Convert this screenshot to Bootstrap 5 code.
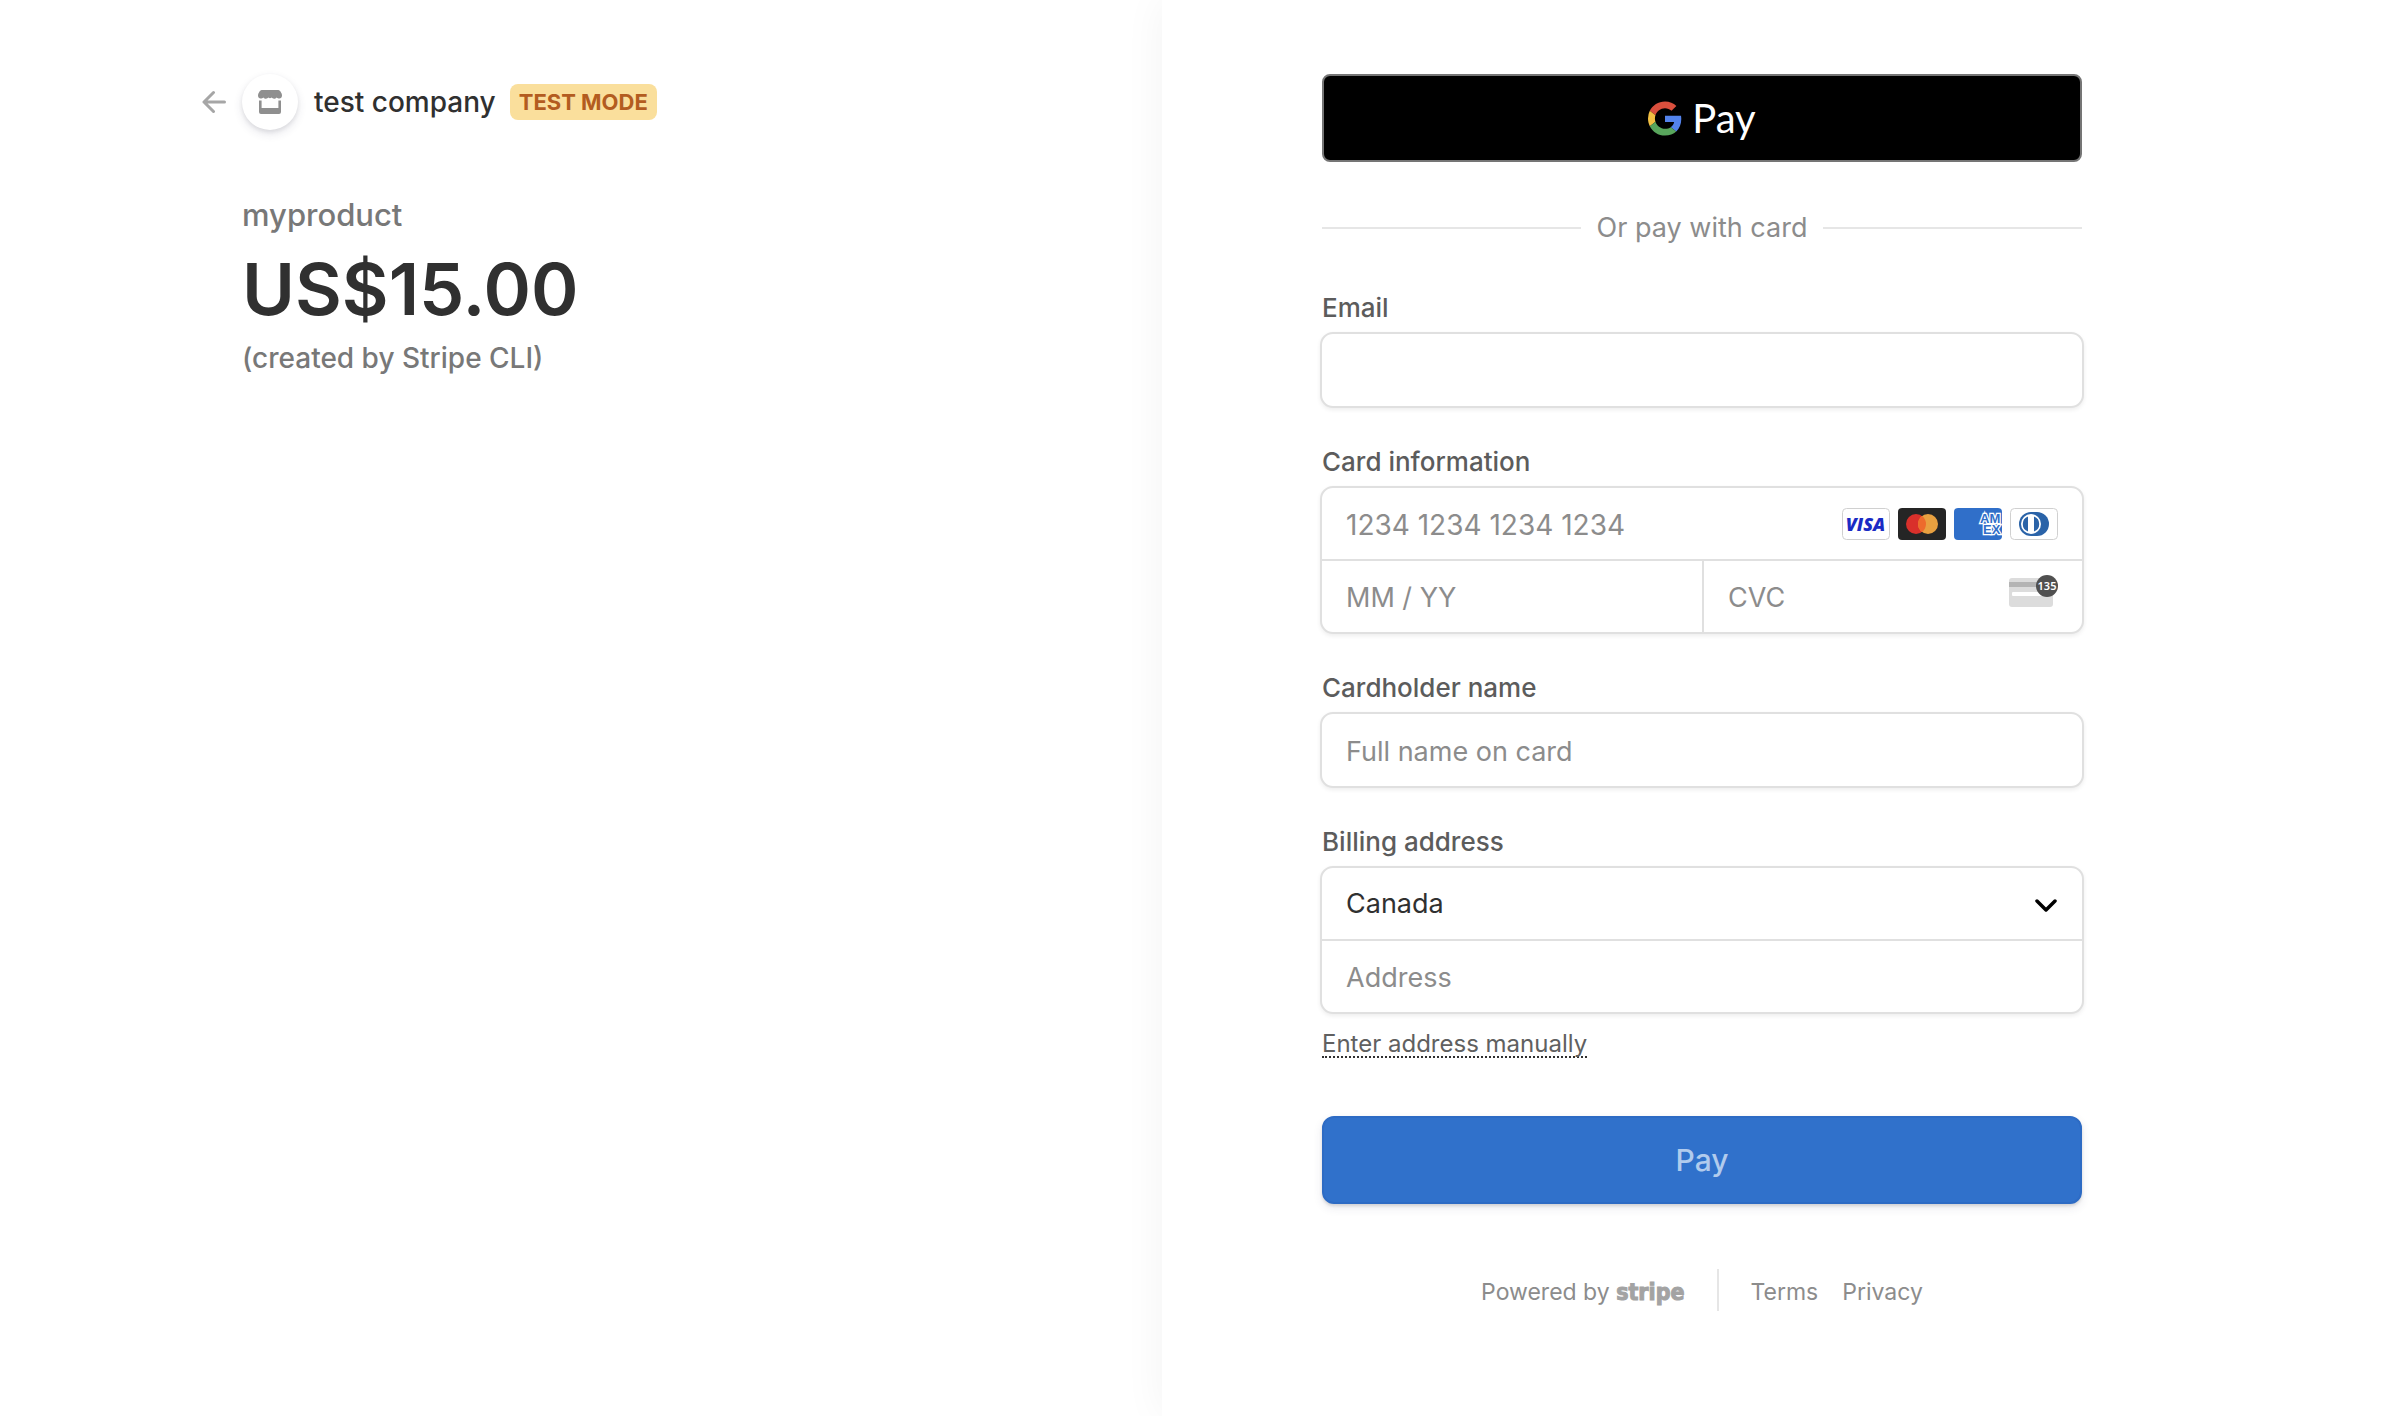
<!DOCTYPE html>
<html lang="en">
<head>
<meta charset="utf-8">
<meta name="viewport" content="width=device-width, initial-scale=1">
<title>test company</title>
<link href="https://cdn.jsdelivr.net/npm/bootstrap@5.3.0/dist/css/bootstrap.min.css" rel="stylesheet">
<style>
  body { font-family: Inter, "Liberation Sans", sans-serif; background: #fff; color: #303030; font-size: 26px; }
  svg { display: block; flex: none; }
  .summary-side { width: calc(50% - 40px); padding: 74px 160px 74px 64px; }
  .summary-inner { width: 100%; max-width: 760px; }
  .pay-side { min-width: 0; padding: 74px 64px 74px 160px; background: #fff; box-shadow: 0 0 40px rgba(0,0,0,.05); }
  .pay-inner { max-width: 760px; }
  .merchant { margin-left: -40px; height: 56px; }
  .store-circle { width: 56px; height: 56px; background: #fff; box-shadow: 0 4px 10px rgba(50,50,93,.12), 0 2px 4px rgba(0,0,0,.08); }
  .merchant-name { font-size: 28px; line-height: 36px; color: #303030; }
  .mode-tag { font-size: 22px; line-height: 36px; font-weight: 700; background: #fadf9c; color: #b35c20; border-radius: 8px; padding: 0 9px; margin-left: 14px; }
  .product-name { font-size: 31px; line-height: 40px; color: #787878; margin-top: 65px; }
  .product-price { font-size: 72px; line-height: 88px; font-weight: 600; margin-top: 10px; }
  .product-note { font-size: 28px; line-height: 36px; color: #787878; margin-top: 7px; }
  .gpay { height: 88px; background: #000; border: 2px solid #757575; border-radius: 8px; color: #fff; gap: 10px; }
  .gpay-word { font-family: Lato, sans-serif; font-size: 40px; line-height: 48px; }
  .or-row { margin: 48px 0 46px; color: #8c8c8c; font-size: 27px; line-height: 36px; }
  .or-row hr { height: 2px; border: 0; background: #e6e6e6; opacity: 1; margin: 0; }
  .field-block + .field-block { margin-top: 38px; }
  .field-title { display: block; font-size: 26px; line-height: 32px; font-weight: 500; color: #5c5c5c; margin-bottom: 8px; }
  .field-box { margin: 0 -2px; border: 2px solid #e0e0e0; border-radius: 13px; background: #fff; box-shadow: 0 2px 4px rgba(0,0,0,.07); }
  .field-box .form-control, .field-box .form-select { height: 72px; border: 0; border-radius: 11px; padding: 2px 24px 0; font-size: 27px; background: transparent; color: #303030; box-shadow: none; }
  .field-box.stacked .form-control, .field-box.stacked .form-select { height: 71px; }
  .field-box .form-control.card-digits { font-size: 28px; }
  .field-box .form-control::placeholder { color: #8c8c8c; opacity: 1; }
  .split-top { border-top: 2px solid #e0e0e0; }
  .split-left { border-left: 2px solid #e0e0e0; }
  .field-icons { position: absolute; top: 20px; right: 24px; pointer-events: none; }
  .field-icons.cvc-icon { top: 14px; }
  .field-icons.caret-icon { top: 31px; }
  .manual-link { margin-top: 18px; font-size: 24px; line-height: 24px; color: #606060; text-decoration: none; border-bottom: 2px dotted #303030; }
  .pay-btn { height: 88px; margin-top: 58px; background: #3071cb; border: 2px solid #2d6bc4; border-radius: 12px; color: #b1cbed; font-size: 30px; box-shadow: 0 4px 10px rgba(50,50,93,.1), 0 2px 3px rgba(0,0,0,.12); }
  .pay-btn:hover { background: #2b69c0; color: #fff; }
  .foot { margin-top: 65px; font-size: 23px; line-height: 28px; color: #8c8c8c; }
  .foot a { color: #8c8c8c; text-decoration: none; padding-top: 4px; }
  .stripe-word { font-family: "DejaVu Sans Condensed", "DejaVu Sans", sans-serif; font-weight: 700; font-size: 23px; color: #a3a3a3; -webkit-text-stroke: 1px #a3a3a3; }
  .foot-rule { width: 2px; height: 42px; background: #e6e6e6; margin: 0 32px; }
</style>
</head>
<body>
<div class="d-flex min-vh-100">
  <section class="summary-side d-flex justify-content-end">
    <div class="summary-inner">
      <header class="merchant d-flex align-items-center">
        <a href="#" class="me-3" aria-label="Back">
          <svg width="24" height="24" viewBox="0 0 24 24" fill="none" stroke="#a6a6a6" stroke-width="3" stroke-linecap="round" stroke-linejoin="round"><path d="M22.500 12H2M11.500 2.500L2 12l9.500 9.500"/></svg>
        </a>
        <span class="store-circle rounded-circle d-flex align-items-center justify-content-center">
          <svg width="24" height="24" viewBox="0 0 24 24" fill="#8f8f8f"><path d="M3.500 0h17C21.500 0 24 3 24 5.500c0 2-1.200 3-2.600 3-1.200 0-2-.4-2.700-1.100-.7.900-1.700 1.300-2.700 1.300s-1.800-.4-2.500-1.100c-.4.400-.9.600-1.500.6s-1.100-.2-1.500-.6C9.800 8.300 9 8.700 8 8.700s-2-.4-2.700-1.300c-.7.700-1.500 1.100-2.700 1.100C1.200 8.500 0 7.500 0 5.500 0 3 2.500 0 3.500 0z"/><path d="M1 10.500h2.600V18h16.800v-7.500H23V22a2 2 0 0 1-2 2H3a2 2 0 0 1-2-2z"/></svg>
        </span>
        <span class="merchant-name fw-medium ms-3">test company</span>
        <span class="mode-tag">TEST MODE</span>
      </header>
      <div class="product-name fw-medium">myproduct</div>
      <div class="product-price">US$15.00</div>
      <div class="product-note fw-medium">(created by Stripe CLI)</div>
    </div>
  </section>

  <main class="pay-side flex-grow-1">
    <form class="pay-inner" onsubmit="return false">
      <button type="button" class="gpay w-100 d-flex align-items-center justify-content-center p-0" aria-label="Google Pay">
        <svg width="34" height="35" viewBox="0 0 48 48"><path fill="#d94f3d" d="M24 9.500c3.540 0 6.710 1.220 9.210 3.600l6.850-6.850C35.900 2.380 30.470 0 24 0 14.620 0 6.510 5.380 2.560 13.220l7.980 6.190C12.430 13.720 17.740 9.500 24 9.500z"/><path fill="#5383ec" d="M46.980 24.550c0-1.570-.15-3.090-.38-4.550H24v9.020h12.940c-.58 2.960-2.260 5.480-4.780 7.180l7.730 6c4.510-4.180 7.090-10.360 7.090-17.650z"/><path fill="#f2bf42" d="M10.530 28.590A14.500 14.500 0 0 1 9.770 24c0-1.600.27-3.140.76-4.590l-7.980-6.190A23.900 23.900 0 0 0 0 24c0 3.880.92 7.540 2.560 10.780z"/><path fill="#58a55c" d="M24 48c6.480 0 11.930-2.130 15.890-5.810l-7.730-6c-2.150 1.450-4.920 2.300-8.160 2.300-6.260 0-11.570-4.220-13.470-9.910l-7.980 6.190C6.510 42.620 14.620 48 24 48z"/></svg>
        <span class="gpay-word">Pay</span>
      </button>

      <div class="or-row d-flex align-items-center gap-3">
        <hr class="flex-grow-1"><span>Or pay with card</span><hr class="flex-grow-1">
      </div>

      <div class="field-block">
        <label class="field-title" for="email">Email</label>
        <div class="field-box"><input class="form-control" type="email" id="email"></div>
      </div>

      <div class="field-block">
        <label class="field-title" for="cardnum">Card information</label>
        <div class="field-box stacked">
          <div class="position-relative">
            <input class="form-control card-digits" type="text" id="cardnum" placeholder="1234 1234 1234 1234">
            <div class="field-icons d-flex gap-2">
              <svg width="48" height="32" viewBox="0 0 48 32"><rect x=".5" y=".5" width="47" height="31" rx="4" fill="#fff" stroke="#d0d0d0"/><text x="23.500" y="22.500" text-anchor="middle" font-family="Open Sans" font-size="18" font-weight="800" font-style="italic" fill="#1a2bc4">VISA</text></svg>
              <svg width="48" height="32" viewBox="0 0 48 32"><rect width="48" height="32" rx="4" fill="#252525"/><circle cx="18" cy="16" r="10" fill="#d9302b"/><circle cx="30" cy="16" r="10" fill="#e8a040"/><path d="M24 8a10 10 0 0 1 0 16a10 10 0 0 1 0-16z" fill="#ed6b2c"/></svg>
              <svg width="48" height="32" viewBox="0 0 48 32"><rect width="48" height="32" rx="4" fill="#306fc9"/><text font-family="Liberation Sans" font-size="13" font-weight="700" fill="#306fc9" stroke="#fff" stroke-width="2.500" paint-order="stroke"><tspan x="26" y="15">AM</tspan><tspan x="29" y="26">EX</tspan></text></svg>
              <svg width="48" height="32" viewBox="0 0 48 32"><rect x=".5" y=".5" width="47" height="31" rx="4" fill="#fff" stroke="#d0d0d0"/><path d="M21 4h6a12 12 0 0 1 0 24h-6a12 12 0 0 1 0-24z" fill="#2a63a8"/><circle cx="21" cy="16" r="10" fill="#fff"/><path d="M18 8.500v15a8 8 0 0 1 0-15zM24 8.500v15a8 8 0 0 0 0-15z" fill="#2a63a8"/></svg>
            </div>
          </div>
          <div class="d-flex split-top">
            <div class="w-50"><input class="form-control" type="text" aria-label="Expiration" placeholder="MM / YY"></div>
            <div class="w-50 position-relative split-left">
              <input class="form-control" type="text" aria-label="CVC" placeholder="CVC">
              <div class="field-icons cvc-icon">
                <svg width="49" height="32" viewBox="0 0 49 32"><rect y="3" width="44" height="29" rx="3" fill="#dcdcdc"/><rect y="7" width="44" height="5" fill="#b4b4b4"/><rect x="3" y="17" width="38" height="4" rx="1" fill="#fff"/><circle cx="38" cy="11" r="11" fill="#505050"/><text x="38" y="15" text-anchor="middle" font-family="Noto Sans" font-size="11" font-weight="600" fill="#fff">135</text></svg>
              </div>
            </div>
          </div>
        </div>
      </div>

      <div class="field-block">
        <label class="field-title" for="holder">Cardholder name</label>
        <div class="field-box"><input class="form-control" type="text" id="holder" placeholder="Full name on card"></div>
      </div>

      <div class="field-block">
        <label class="field-title" for="country">Billing address</label>
        <div class="field-box stacked">
          <div class="position-relative">
            <select class="form-select" id="country"><option>Canada</option></select>
            <div class="field-icons caret-icon">
              <svg width="24" height="14" viewBox="0 0 24 14" fill="none" stroke="#000" stroke-width="3.500" stroke-linecap="round" stroke-linejoin="round"><path d="M3 2l9 9 9-9"/></svg>
            </div>
          </div>
          <div class="split-top"><input class="form-control" type="text" aria-label="Address" placeholder="Address"></div>
        </div>
        <div class="d-flex"><a href="#" class="manual-link">Enter address manually</a></div>
      </div>

      <button type="submit" class="btn pay-btn w-100 p-0 fw-medium">Pay</button>

      <footer class="foot d-flex justify-content-center align-items-center">
        <a href="#" class="d-flex align-items-baseline">Powered by&nbsp;<span class="stripe-word">stripe</span></a>
        <span class="foot-rule"></span>
        <nav class="d-flex gap-4"><a href="#">Terms</a><a href="#">Privacy</a></nav>
      </footer>
    </form>
  </main>
</div>
<script src="https://cdn.jsdelivr.net/npm/bootstrap@5.3.0/dist/js/bootstrap.bundle.min.js"></script>
</body>
</html>
